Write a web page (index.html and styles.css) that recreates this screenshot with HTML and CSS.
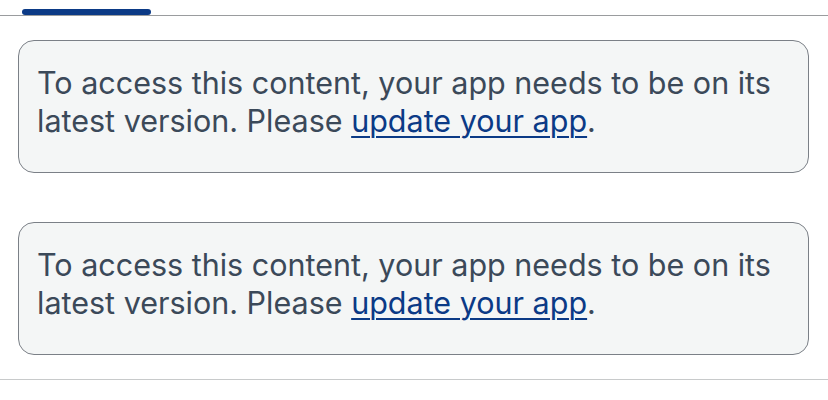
FILE: index.html
```html
<!DOCTYPE html>
<html>
<head>
<meta charset="utf-8">
<link rel="stylesheet" href="styles.css">
</head>
<body>
<div class="tabs">
  <div class="tab-indicator"></div>
</div>
<div class="content">
  <div class="notice">To access this content, your app needs to be on its latest version. Please <a class="link" href="#">update your app</a>.</div>
  <div class="notice">To access this content, your app needs to be on its latest version. Please <a class="link" href="#">update your app</a>.</div>
</div>
<div class="divider"></div>
</body>
</html>
```
FILE: styles.css
```css
html, body {
  margin: 0;
  padding: 0;
  background: #ffffff;
}
body {
  width: 828px;
  font-family: Inter, "Noto Sans", sans-serif;
}
.tabs {
  height: 15px;
  border-bottom: 1px solid #9a9c9e;
  padding-left: 22px;
  display: flex;
  align-items: flex-end;
}
.tab-indicator {
  width: 129px;
  height: 6px;
  background: #0b3a86;
  border-radius: 3px;
}
.content {
  padding: 24px 19px 24px 18px;
  display: flex;
  flex-direction: column;
  gap: 49px;
}
.notice {
  background: #f4f6f6;
  border: 1px solid #7b8087;
  border-radius: 16px;
  padding: 23px 18px 32px 18px;
  font-size: 30.5px;
  line-height: 38px;
  color: #3b4959;
}
.link {
  color: #0b3a86;
  text-decoration: underline;
  text-decoration-thickness: 2px;
  text-underline-offset: 4px;
}
.divider {
  border-top: 1px solid #c8cacb;
}
```
